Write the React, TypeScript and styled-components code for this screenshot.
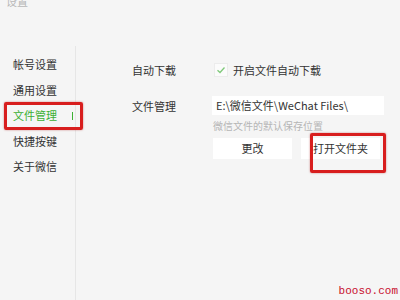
import styled, { createGlobalStyle } from "styled-components";

const Global = createGlobalStyle`
    html, body {
        margin: 0;
        padding: 0;
        background: #f5f5f5;
        font-family: "Noto Sans CJK SC", "Noto Sans", sans-serif;
    }
`;

const Window = styled.div`
    position: relative;
    width: 400px;
    height: 300px;
    overflow: hidden;
    background: #f5f5f5;
    color: #333;
    display: flex;
    flex-direction: column;
`;

const Title = styled.div`
    height: 8px;
    padding-left: 6px;
    font-size: 11px;
    line-height: 1;
    color: #b8b8b8;
    margin-top: -4px;
    margin-bottom: 42px;
`;

const Body = styled.div`
    flex: 1;
    display: flex;
`;

const Sidebar = styled.ul`
    list-style: none;
    margin: 0;
    padding: 6px 0 0;
    width: 75px;
    border-right: 1px solid #e6e6e6;
    display: flex;
    flex-direction: column;
`;

const NavItem = styled.li<{ $active?: boolean }>`
    position: relative;
    height: 25.5px;
    line-height: 25.5px;
    padding-left: 13px;
    font-size: 11px;
    color: ${(p) => (p.$active ? "#3cb034" : "#333")};
`;

const ActiveBar = styled.span`
    position: absolute;
    right: 2px;
    top: 9px;
    width: 1.5px;
    height: 8px;
    background: #3cb034;
`;

const Content = styled.div`
    padding: 14px 0 0 56px;
    display: flex;
    flex-direction: column;
`;

const Row = styled.div<{ $top?: number }>`
    display: flex;
    align-items: flex-start;
    margin-top: ${(p) => p.$top ?? 0}px;
`;

const Label = styled.div`
    width: 80px;
    font-size: 11px;
    line-height: 20px;
    color: #333;
`;

const CheckRow = styled.div`
    display: flex;
    align-items: center;
    gap: 5px;
    height: 20px;
    margin-left: 2px;
    font-size: 11px;
    color: #333;
`;

const CheckBox = styled.span`
    width: 12px;
    height: 12px;
    background: #fbfbfb;
    border: 1px solid #ececec;
    display: flex;
    align-items: center;
    justify-content: center;
`;

const Field = styled.div`
    display: flex;
    flex-direction: column;
`;

const PathInput = styled.div`
    width: 168px;
    height: 19px;
    line-height: 19px;
    padding-left: 4px;
    background: #fff;
    font-size: 11px;
    color: #333;
`;

const Hint = styled.div`
    margin-top: 5px;
    font-size: 10px;
    line-height: 12px;
    color: #b5b5b5;
    padding-left: 1px;
`;

const Buttons = styled.div`
    display: flex;
    gap: 9px;
    margin-top: 6px;
    margin-left: 1px;
`;

const Button = styled.div`
    width: 79px;
    height: 21px;
    line-height: 21px;
    text-align: center;
    background: #fff;
    font-size: 11px;
    color: #333;
`;

const Highlight = styled.div<{ $x: number; $y: number; $w: number; $h: number }>`
    position: absolute;
    left: ${(p) => p.$x}px;
    top: ${(p) => p.$y}px;
    width: ${(p) => p.$w}px;
    height: ${(p) => p.$h}px;
    border: 3px solid #d81e1e;
    border-radius: 2px;
    box-sizing: border-box;
    box-shadow: 0 0 2px rgba(160, 0, 0, 0.5);
`;

const Watermark = styled.div`
    position: absolute;
    right: 2px;
    bottom: 3px;
    font-family: "Liberation Mono", monospace;
    font-size: 11px;
    color: #c8102e;
`;

const navItems = ["帐号设置", "通用设置", "文件管理", "快捷按键", "关于微信"];

export default function App() {
    return (
        <Window>
            <Global />
            <Title>设置</Title>
            <Body>
                <Sidebar>
                    {navItems.map((item) => (
                        <NavItem key={item} $active={item === "文件管理"}>
                            {item}
                            {item === "文件管理" && <ActiveBar />}
                        </NavItem>
                    ))}
                </Sidebar>
                <Content>
                    <Row>
                        <Label>自动下载</Label>
                        <CheckRow>
                            <CheckBox>
                                <svg width="10" height="10" viewBox="0 0 10 10">
                                    <path d="M1.5 5.2 L4 7.5 L8.5 2.5" fill="none" stroke="#7fc97a" strokeWidth="1.3" />
                                </svg>
                            </CheckBox>
                            开启文件自动下载
                        </CheckRow>
                    </Row>
                    <Row $top={16}>
                        <Label>文件管理</Label>
                        <Field>
                            <PathInput>E:\微信文件\WeChat Files\</PathInput>
                            <Hint>微信文件的默认保存位置</Hint>
                            <Buttons>
                                <Button>更改</Button>
                                <Button>打开文件夹</Button>
                            </Buttons>
                        </Field>
                    </Row>
                </Content>
            </Body>
            <Highlight $x={4} $y={102} $w={79} $h={28} />
            <Highlight $x={310} $y={133} $w={76} $h={40} />
            <Watermark>booso.com</Watermark>
        </Window>
    );
}
